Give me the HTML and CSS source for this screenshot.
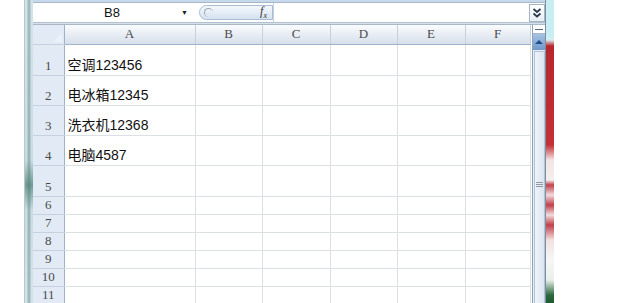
FILE: index.html
```html
<!DOCTYPE html>
<html lang="zh-CN">
<head>
  <meta charset="UTF-8">
  <title>Excel</title>
  <link rel="stylesheet" href="styles.css">
</head>
<body>
  <div class="lead"></div>
  <div class="frame-left"></div>

  <div class="excel">
    <div class="topband"></div>

    <!-- 编辑栏 -->
    <div class="formula-bar">
      <div class="namebox">
        <span class="cellref">B8</span>
        <span class="dropdown">&#9660;</span>
      </div>
      <div class="fxbtn">
        <span class="knob"></span>
        <span class="fx">f<sub>x</sub></span>
      </div>
      <div class="input"></div>
      <div class="expand">
        <svg width="10" height="12" viewBox="0 0 10 12">
          <path d="M1.5 2 L5 5 L8.5 2 M1.5 6.5 L5 9.5 L8.5 6.5" fill="none" stroke="#2a3a4c" stroke-width="1.8"/>
        </svg>
      </div>
    </div>
    <div class="separator"></div>

    <div class="sheet">
      <table class="grid">
        <colgroup>
          <col class="c-head">
          <col class="c-a">
          <col class="c-b">
          <col class="c-c">
          <col class="c-d">
          <col class="c-e">
          <col class="c-f">
        </colgroup>
        <tr class="colhead">
          <th class="corner"><span class="tri"></span></th>
          <th>A</th><th>B</th><th>C</th><th>D</th><th>E</th><th>F</th>
        </tr>
        <tr class="tall wide"><th>1</th><td>空调123456</td><td></td><td></td><td></td><td></td><td></td></tr>
        <tr class="tall"><th>2</th><td>电冰箱12345</td><td></td><td></td><td></td><td></td><td></td></tr>
        <tr class="tall"><th>3</th><td>洗衣机12368</td><td></td><td></td><td></td><td></td><td></td></tr>
        <tr class="tall"><th>4</th><td>电脑4587</td><td></td><td></td><td></td><td></td><td></td></tr>
        <tr class="tall wide"><th>5</th><td></td><td></td><td></td><td></td><td></td><td></td></tr>
        <tr class="short"><th>6</th><td></td><td></td><td></td><td></td><td></td><td></td></tr>
        <tr class="short"><th>7</th><td></td><td></td><td></td><td></td><td></td><td></td></tr>
        <tr class="short"><th>8</th><td></td><td></td><td></td><td></td><td></td><td></td></tr>
        <tr class="short"><th>9</th><td></td><td></td><td></td><td></td><td></td><td></td></tr>
        <tr class="short"><th>10</th><td></td><td></td><td></td><td></td><td></td><td></td></tr>
        <tr class="short"><th>11</th><td></td><td></td><td></td><td></td><td></td><td></td></tr>
      </table>

      <!-- 垂直滚动条 -->
      <div class="vscroll">
        <div class="split"><span></span></div>
        <div class="up"><span class="arrow"></span></div>
        <div class="track">
          <div class="thumb"><span class="grip"></span></div>
        </div>
      </div>
    </div>
  </div>

  <div class="frame-right"></div>
</body>
</html>
```

FILE: styles.css
```css
html, body {
  margin: 0;
  height: 303px;
  overflow: hidden;
  background: #fff;
}
body {
  display: flex;
  font-family: "Liberation Sans", "Noto Sans CJK SC", sans-serif;
}
.lead {
  width: 24px;
  flex: none;
}
.frame-left {
  width: 9px;
  flex: none;
  background:
    linear-gradient(to right, transparent 2px, rgba(70,110,105,0.35) 3px, rgba(70,110,105,0.35) 5px, transparent 6px),
    linear-gradient(to bottom, #d3e3ea 0, #c9dde2 160px, #6f9c95 185px, #c9dde2 210px, #d3e3ea 100%);
  border-left: 1px solid #b8c6cf;
  box-sizing: border-box;
}
.excel {
  width: 512px;
  flex: none;
  display: flex;
  flex-direction: column;
}
.topband {
  height: 2px;
  background: #c6d9ec;
}
.formula-bar {
  height: 20px;
  display: flex;
  align-items: center;
  background: #fff;
  border-top: 1px solid #a7b7c8;
  box-sizing: border-box;
}
.namebox {
  width: 162px;
  height: 100%;
  display: flex;
  align-items: center;
  font-size: 13px;
  color: #111;
}
.cellref {
  flex: 1;
  text-align: center;
  padding-left: 10px;
}
.dropdown {
  font-size: 7px;
  color: #222;
  width: 14px;
}
.fxbtn {
  width: 74px;
  height: 15px;
  margin-left: 4px;
  border: 1px solid #a9bcd2;
  border-radius: 8px 0 0 8px;
  background: linear-gradient(to bottom, #f4f8fc, #d5e2f1);
  display: flex;
  align-items: center;
  justify-content: space-between;
  box-sizing: border-box;
}
.knob {
  width: 8px;
  height: 8px;
  margin-left: 4px;
  border-radius: 50%;
  border-left: 1px solid #9aa7b6;
  border-top: 1px solid #9aa7b6;
}
.fx {
  font-family: "Liberation Serif", serif;
  font-style: italic;
  font-size: 12px;
  color: #333;
  margin-right: 5px;
}
.fx sub {
  font-size: 8px;
}
.input {
  flex: 1;
  height: 100%;
  border-left: 1px solid #c6d1de;
}
.expand {
  width: 16px;
  height: 18px;
  border: 1px solid #a5b3c3;
  background: linear-gradient(to bottom, #fff, #e8eef5);
  box-sizing: border-box;
  display: flex;
  align-items: center;
  justify-content: center;
}
.separator {
  height: 1px;
  background: #d6e0ea;
  border-top: 1px solid #b3c1cf;
  border-bottom: 1px solid #a9b7c6;
}
.sheet {
  flex: 1;
  display: flex;
  overflow: hidden;
}
.grid {
  width: 497px;
  border-collapse: collapse;
  table-layout: fixed;
  flex: none;
  align-self: flex-start;
}
.c-head { width: 31px; }
.c-a { width: 131px; }
.c-b { width: 67px; }
.c-c { width: 68px; }
.c-d { width: 67px; }
.c-e { width: 68px; }
.c-f { width: 65px; }

.grid th {
  font-family: "Liberation Serif", serif;
  font-weight: normal;
  font-size: 13px;
  color: #4a4a4a;
  padding: 0;
}
.colhead {
  height: 19px;
}
.colhead th {
  background: linear-gradient(to bottom, #fafcfe, #e4eaf2 60%, #d7dfea);
  border-right: 1px solid #c5d1df;
  border-bottom: 1px solid #9fb2c8;
  vertical-align: middle;
}
.colhead th.corner {
  background: #a9c4e4;
  position: relative;
  border-right: 1px solid #9fb2c8;
}
.tri {
  position: absolute;
  right: 2px;
  bottom: 2px;
  width: 0;
  height: 0;
  border-left: 9px solid transparent;
  border-bottom: 9px solid #e9f1fb;
}
.grid tr > th:first-child {
  background: #e1eaf5;
  border-right: 1px solid #9fb2c8;
  border-bottom: 1px solid #c5d1df;
  vertical-align: bottom;
  text-align: center;
  padding-bottom: 1px;
}
.grid td {
  border-right: 1px solid #dcdfe4;
  border-bottom: 1px solid #dcdfe4;
  font-size: 14px;
  color: #111;
  vertical-align: bottom;
  padding: 0 0 2px 3px;
  line-height: 16px;
  white-space: nowrap;
  overflow: hidden;
}
.tall {
  height: 30px;
}
.tall.wide {
  height: 31px;
}
.short {
  height: 18px;
}
.vscroll {
  width: 15px;
  flex: none;
  margin-left: 1px;
  display: flex;
  flex-direction: column;
  border-left: 1px solid #8fa3b8;
  border-right: 1px solid #8fa3b8;
  box-sizing: border-box;
  background: #e6edf5;
}
.split {
  height: 8px;
  background: #fff;
  border-bottom: 1px solid #a7b7c8;
  display: flex;
  align-items: center;
  justify-content: center;
}
.split span {
  width: 8px;
  height: 1px;
  background: #55677a;
}
.up {
  height: 16px;
  background: linear-gradient(to bottom, #a7c3e4, #6f97c8);
  display: flex;
  align-items: center;
  justify-content: center;
}
.arrow {
  width: 0;
  height: 0;
  border-left: 4px solid transparent;
  border-right: 4px solid transparent;
  border-bottom: 4px solid #1f4f8a;
}
.track {
  flex: 1;
  overflow: hidden;
}
.thumb {
  height: 266px;
  margin: 1px 1px 0;
  background: linear-gradient(to right, #eef3f9, #dbe5f0);
  border: 1px solid #b3c3d4;
  display: flex;
  align-items: center;
  justify-content: center;
}
.grip {
  width: 7px;
  height: 6px;
  background: repeating-linear-gradient(to bottom, #8e9aa8 0, #8e9aa8 1px, transparent 1px, transparent 2px);
}
.frame-right {
  width: 8px;
  flex: none;
  background:
    linear-gradient(to bottom,
      #c8eef4 0, #c8eef4 36px,
      #d9eef0 40px, #b8262e 46px, #c33038 145px,
      #f3e4e4 160px, #f5eeee 180px,
      #c0404a 185px, #f1dcdc 195px, #c0404a 205px, #f1dcdc 215px, #c0404a 225px, #f2e0e0 240px,
      #f7f7f7 260px, #e8f0ea 280px, #2c6a3e 295px, #1f5a30 100%);
  border-left: 1px solid #7d8e9e;
}
```
